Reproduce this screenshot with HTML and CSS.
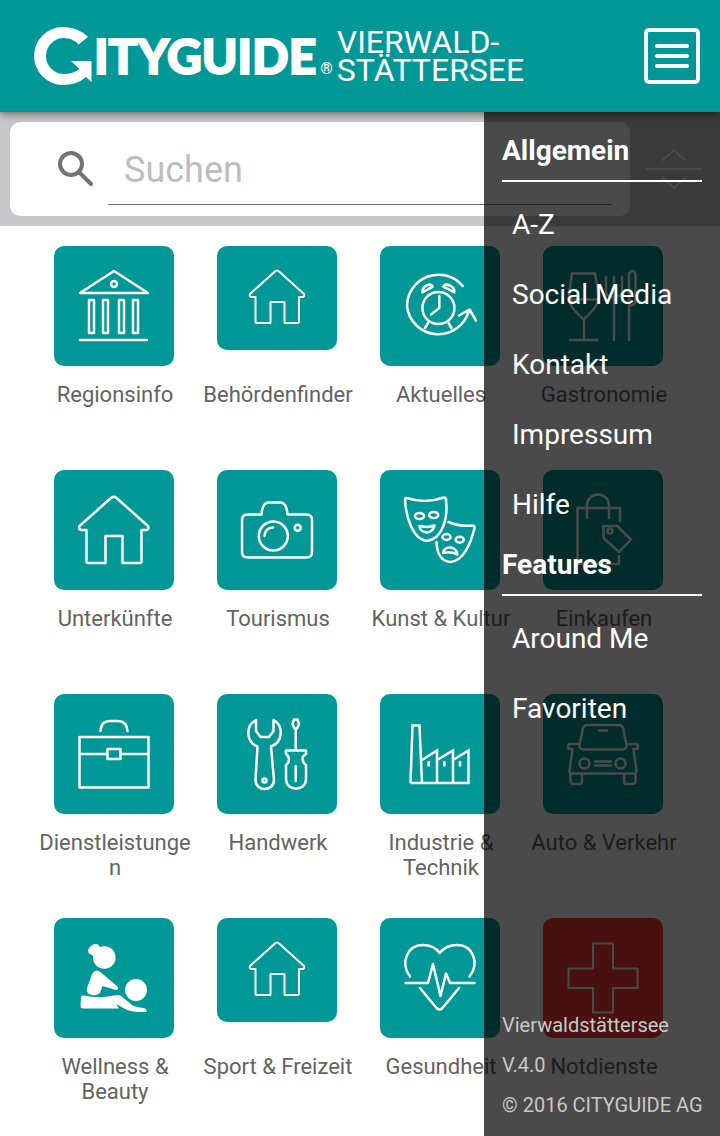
FILE: index.html
```html
<!DOCTYPE html>
<html lang="de">
<head>
<meta charset="utf-8">
<meta name="viewport" content="width=device-width, initial-scale=1">
<title>Cityguide Vierwaldstättersee</title>
<link rel="stylesheet" href="styles.css">
</head>
<body>
<div class="app">
  <header class="topbar">
    <div class="brand">
      <svg class="brand-mark" viewBox="34 26 58 58" aria-hidden="true"><path d="M88 36Q78 26 63 26A29 29 0 0 0 63 84Q77 84 86 76L91.500 81V60H71L79.500 68Q73 73 64 73A18 18 0 0 1 64 37Q73 37 78.500 43.500Z"/></svg>
      <span class="brand-name">ITYGUIDE</span>
      <span class="brand-reg">®</span>
      <span class="brand-region">VIERWALD-<br>STÄTTERSEE</span>
    </div>
    <button class="menu-button" type="button" aria-label="Menü">
      <svg viewBox="0 0 56 56"><rect x="2" y="2" width="52" height="52" rx="3"/><path d="M13 18H43M13 28H43M13 38H43"/></svg>
    </button>
  </header>

  <form class="search">
    <div class="search-card">
      <svg class="search-icon" viewBox="0 0 36 36" aria-hidden="true"><circle cx="13" cy="13" r="11"/><path d="M21 21L33 33"/></svg>
      <input class="search-input" type="text" placeholder="Suchen" aria-label="Suchen">
    </div>
    <button class="sort-button" type="button" aria-label="Ausklappen">
      <svg viewBox="0 0 56 40"><path d="M17 11L28 1L39 11M1 20H55M17 29L28 39L39 29"/></svg>
    </button>
  </form>

  <main class="grid">
    <a class="cell" href="#"><span class="tile-slot"><span class="tile"><svg viewBox="0 0 120 120"><path d="M60 25L94 47H26ZM26 94H93M35 54h5v33h-5zM49 54h5v33h-5zM65 54h5v33h-5zM79 54h5v33h-5z"/><circle cx="60" cy="38" r="3"/></svg></span></span><span class="label">Regionsinfo</span></a>

    <a class="cell" href="#"><span class="tile-slot"><span class="tile tile-short"><svg class="thin" viewBox="0 0 120 104"><path d="M58.500 25Q60 24 61.500 25L87 48Q88 51 85 51H82V76Q82 77 81 77H67.500V56H53.500V77H39.500Q38.500 77 38.500 76V51H35Q32 51 33 48Z"/></svg></span></span><span class="label">Behördenfinder</span></a>

    <a class="cell" href="#"><span class="tile-slot"><span class="tile"><svg viewBox="0 0 120 120"><path d="M82.700 40A31.500 31.500 0 0 0 27 60A31.500 31.500 0 0 0 89 64M79 69.500L89.500 63.500L96 74.500M59.300 50V62L51 68.500M48 77L45 82M68.500 77L71.500 82M42.500 46.500C42 40 50 36.500 52.700 40.500Q51 42 48.500 43Q45 45 42.500 46.500ZM74.300 46.500C75 40 66 36.500 63.300 40.500Q65 42 68 43Q71.500 45 74.300 46.500Z"/><circle cx="58.400" cy="62" r="16"/></svg></span></span><span class="label">Aktuelles</span></a>

    <a class="cell" href="#"><span class="tile-slot"><span class="tile"><svg viewBox="0 0 120 120"><path d="M29 27.500H52L55.500 48C56.500 60 48 66 40.700 73.500C33 66 25 60 26 48ZM26.500 53.500H55.500M41 73.500V94M27 94H54.500M63 31V45Q63 50 71 52Q79 50 79 45V31M71 31V94M86 94V30Q86 25 89.500 25Q92.500 25 92.500 30V55Q92.500 59 86 60"/></svg></span></span><span class="label">Gastronomie</span></a>

    <a class="cell" href="#"><span class="tile-slot"><span class="tile"><svg viewBox="0 0 120 120"><path d="M57.500 27.500Q60 26 62 27.500L94 56Q95.500 60 92 60H87.500V91.500Q87.500 93 86 93H68.500V66H51.500V93H34Q32.500 93 32.500 91.500V60H28Q24 60 25.500 56Z"/></svg></span></span><span class="label">Unterkünfte</span></a>

    <a class="cell" href="#"><span class="tile-slot"><span class="tile"><svg viewBox="0 0 120 120"><path d="M44.500 44.500H30.500Q25 44.500 25 50V82Q25 87.500 30.500 87.500H89.500Q95 87.500 95 82V50Q95 44.500 89.500 44.500H70.500C70 38 68.500 32.500 63.500 32.500H51.500C46.500 32.500 45 38 44.500 44.500M47.500 66Q48 58 56 57.500"/><circle cx="56.300" cy="66" r="14.500"/><circle cx="80.700" cy="57.700" r="3"/></svg></span></span><span class="label">Tourismus</span></a>

    <a class="cell" href="#"><span class="tile-slot"><span class="tile"><svg viewBox="0 0 120 120"><path d="M26 28Q46 34 64 27.500Q66 27.500 66 30C68 48 63 69 46.500 71C33 69 26 48 25 30Q25 28 26 28ZM39.500 56Q43 56.500 47 57Q51 56.500 54.500 55.500Q53 62 47 62.500Q40 62 39.500 56ZM68.500 52Q80 57 93 55.500Q95 56 94.500 58C91 73 83 92 70 92C60 91 57 82 56.500 72M63 83Q64 77 71 77.500Q77 79 77.500 84.500Q70 81 63 83Z"/><ellipse cx="39.500" cy="46" rx="4.500" ry="3"/><ellipse cx="53.700" cy="45" rx="4.500" ry="3"/><ellipse cx="66.500" cy="67" rx="4" ry="3"/><ellipse cx="79.700" cy="69.700" rx="4" ry="3"/></svg></span></span><span class="label">Kunst &amp; Kultur</span></a>

    <a class="cell" href="#"><span class="tile-slot"><span class="tile"><svg viewBox="0 0 120 120"><path d="M77 51V38H34.500V94H76V86M44 48V35A11 10.500 0 0 1 66 35V48M60.500 56H74L88 69.500L76 82L60.500 68Z"/><circle cx="67" cy="61" r="2.500"/></svg></span></span><span class="label">Einkaufen</span></a>

    <a class="cell" href="#"><span class="tile-slot"><span class="tile"><svg viewBox="0 0 120 120"><path d="M25.500 43H94.500V93.500H25.500ZM25.500 60H53.500M66.500 60H94.500M53.500 55H66.500V65H53.500ZM46.500 37Q47 27 56 27H64Q72.500 27 73.500 37"/></svg></span></span><span class="label">Dienstleistungen</span></a>

    <a class="cell" href="#"><span class="tile-slot"><span class="tile"><svg viewBox="0 0 120 120"><path d="M39 26C28 32 29 48 40.500 52.500L38.500 86C38.500 98 57 98 57 86L54 52.500C66 48 67 32 56.500 26V37L52 43H43.500L39 37ZM77 25.500H80.500L82 30L80 34.500H77.500L75.500 30ZM78.700 35V56M69 56.500H89V60Q85 62 85.500 65.500Q86 69 89 71V85C89 98 69 98 69 85V71Q72 69 72 65.500Q72 62 69 60ZM78.700 72V87"/><circle cx="47.500" cy="86.500" r="2"/></svg></span></span><span class="label">Handwerk</span></a>

    <a class="cell" href="#"><span class="tile-slot"><span class="tile"><svg viewBox="0 0 120 120"><path class="miter" d="M30.500 89L32.500 31.500H39.500L42 89M42 66L57 56.500V89M57 66L73 56.500V89M73 66L88.500 56.500V89H30.500M48.700 67V72.500M64.300 67V72.500M80 67V72.500"/></svg></span></span><span class="label">Industrie &amp; Technik</span></a>

    <a class="cell" href="#"><span class="tile-slot"><span class="tile"><svg viewBox="0 0 120 120"><path d="M44 31H76Q79 31 80 34L83.500 51Q84 55.500 79 55.500H41Q36 55.500 36.500 51L40 34Q41 31 44 31ZM36 50H27Q25 50 25 52.500Q25 55 27 55H29.500L26.500 77Q26.500 79.500 29 79.500H91Q93.500 79.500 93.500 77L90.500 55H93Q95 55 95 52.500Q95 50 93 50H84M27.500 80V87Q27.500 90 30.500 90H36.500Q39 90 39 87V80M81 80V87Q81 90 83.500 90H89.500Q92.500 90 92.500 87V80M52 67.500H68M52 71.500H68M56 36.500H64"/><circle cx="41.500" cy="69.500" r="5"/><circle cx="77.500" cy="69.500" r="5"/></svg></span></span><span class="label">Auto &amp; Verkehr</span></a>

    <a class="cell" href="#"><span class="tile-slot"><span class="tile"><svg class="solid" viewBox="0 0 120 120"><circle cx="50.300" cy="39.500" r="11.300"/><path d="M41 39L34.500 35Q33 31 37 28Q40 25 44 26.500L46 29ZM38 56Q42 50 47 54.500L63.500 68.500Q65 72 62 72L48.500 68L46 75Q41 79 35 76Q32 74 33 70ZM27 79Q27 77 30 77.500Q45 81 60 77.500Q66 76 69 79.500L78 87Q81 89 90 90Q93 91 92.500 94Q78 94.500 72 91.500L62 86L65 90.500H29Q26.500 90.500 26.500 88Z"/><circle cx="82" cy="72" r="11"/></svg></span></span><span class="label">Wellness &amp; Beauty</span></a>

    <a class="cell" href="#"><span class="tile-slot"><span class="tile tile-short"><svg class="thin" viewBox="0 0 120 104"><path d="M58.500 25Q60 24 61.500 25L87 48Q88 51 85 51H82V76Q82 77 81 77H67.500V56H53.500V77H39.500Q38.500 77 38.500 76V51H35Q32 51 33 48Z"/></svg></span></span><span class="label">Sport &amp; Freizeit</span></a>

    <a class="cell" href="#"><span class="tile-slot"><span class="tile"><svg viewBox="0 0 120 120"><path d="M30 58.500C20 45 27 27 43 27Q54 27 59.700 35Q66 27 77 27C93 27 100 45 89.500 58.500M25.500 65H48L53 46L60.500 78L66 55.500L70 65H94.500M40 70L56.500 90Q59.500 93 62.500 90L79 70"/></svg></span></span><span class="label">Gesundheit</span></a>

    <a class="cell" href="#"><span class="tile-slot"><span class="tile tile-alert"><svg class="thin" viewBox="0 0 120 120"><path d="M50 25.500H70V50.500H94.500V70H70V94.500H50V70H25.500V50.500H50Z"/></svg></span></span><span class="label">Notdienste</span></a>
  </main>

  <aside class="drawer">
    <nav>
      <h2 class="drawer-title">Allgemein</h2>
      <ul class="drawer-list">
        <li><a href="#">A-Z</a></li>
        <li><a href="#">Social Media</a></li>
        <li><a href="#">Kontakt</a></li>
        <li><a href="#">Impressum</a></li>
        <li><a href="#">Hilfe</a></li>
      </ul>
      <h2 class="drawer-title">Features</h2>
      <ul class="drawer-list">
        <li><a href="#">Around Me</a></li>
        <li><a href="#">Favoriten</a></li>
      </ul>
    </nav>
    <footer class="drawer-footer">
      <p>Vierwaldstättersee</p>
      <p>V.4.0</p>
      <p>© 2016 CITYGUIDE AG</p>
    </footer>
  </aside>
</div>
</body>
</html>
```
FILE: styles.css
```css
:root {
  --teal: #009797;
  --bar: 112px;
}

* {
  box-sizing: border-box;
}

body {
  margin: 0;
  background: #fff;
  color: #636363;
  font-family: Roboto, "Liberation Sans", sans-serif;
}

a {
  color: inherit;
  text-decoration: none;
}

button {
  padding: 0;
  border: 0;
  background: none;
}

svg {
  display: block;
  fill: none;
  stroke: #fff;
  stroke-width: 2.5;
  stroke-linecap: round;
  stroke-linejoin: round;
}

.app {
  position: relative;
  display: flex;
  flex-direction: column;
  min-height: 100vh;
}

/* Top bar */
.topbar {
  position: relative;
  z-index: 2;
  display: flex;
  align-items: center;
  justify-content: space-between;
  height: var(--bar);
  padding: 0 20px 0 34px;
  background: var(--teal);
  color: #fff;
  box-shadow: 0 2px 8px rgba(0, 0, 0, 0.5);
}

.brand {
  display: flex;
  align-items: center;
}

.brand-mark {
  width: 58px;
  height: 58px;
  fill: #fff;
  stroke: none;
}

.brand-name {
  padding-left: 2px;
  font: 900 48px/56px Lato, sans-serif;
  -webkit-text-stroke: 2px #fff;
}

.brand-reg {
  align-self: flex-end;
  padding: 0 4px;
  font-size: 16px;
  font-weight: 700;
  line-height: 32px;
}

.brand-region {
  font-size: 32px;
  line-height: 28px;
}

.menu-button svg {
  width: 56px;
  height: 56px;
  stroke-width: 4;
}

/* Search */
.search {
  display: flex;
  align-items: center;
  gap: 16px;
  padding: 10px 18px 10px 10px;
  background: #c8c8cc;
}

.search-card {
  display: flex;
  flex: 1;
  align-items: center;
  gap: 14px;
  height: 94px;
  padding: 0 18px 0 48px;
  border-radius: 10px;
  background: #fff;
}

.search-icon {
  width: 36px;
  height: 36px;
  stroke: #737373;
  stroke-width: 4;
}

.search-input {
  flex: 1;
  min-width: 0;
  height: 72px;
  padding: 3px 16px 0;
  border: 0;
  border-bottom: 1px solid #737373;
  outline: 0;
  background: none;
  color: #333;
  font: 36px Roboto, sans-serif;
}

.search-input::placeholder {
  color: #bdbdbd;
}

.sort-button svg {
  width: 56px;
  height: 40px;
  stroke-width: 2;
}

/* Category grid */
.grid {
  display: grid;
  grid-template-columns: repeat(4, 1fr);
  gap: 38px 3px;
  padding: 20px 37px 30px 34px;
}

.cell {
  display: flex;
  flex-direction: column;
  align-items: center;
  gap: 16px;
}

.tile-slot {
  height: 120px;
}

.tile {
  display: block;
  width: 120px;
  height: 120px;
  border-radius: 10px;
  background: var(--teal);
}

.tile-short {
  height: 104px;
}

.tile-alert {
  background: #fa3838;
}

.thin {
  stroke-width: 2;
}

.miter {
  stroke-linecap: butt;
  stroke-linejoin: miter;
}

.solid {
  fill: #fff;
  stroke: none;
}

.label {
  width: 100%;
  min-height: 50px;
  padding: 0 3px 0 5px;
  font-size: 22px;
  line-height: 25px;
  text-align: center;
  overflow-wrap: anywhere;
}

/* Drawer */
.drawer {
  position: absolute;
  z-index: 1;
  top: var(--bar);
  right: 0;
  bottom: 0;
  display: flex;
  flex-direction: column;
  justify-content: space-between;
  width: 236px;
  padding: 14px 18px 11px;
  background: rgba(0, 0, 0, 0.71);
  color: #fff;
}

.drawer-title {
  margin: 0;
  padding: 7px 0 11px;
  border-bottom: 2px solid #fff;
  font-size: 28px;
  font-weight: 700;
  line-height: 36px;
}

.drawer-list {
  margin: 0;
  padding: 8px 0 0 10px;
  list-style: none;
  font-size: 28px;
  line-height: 70px;
  white-space: nowrap;
}

.drawer-footer {
  color: #c8c8c8;
  font-size: 20px;
  line-height: 40px;
  white-space: nowrap;
}

.drawer-footer p {
  margin: 0;
}
```
